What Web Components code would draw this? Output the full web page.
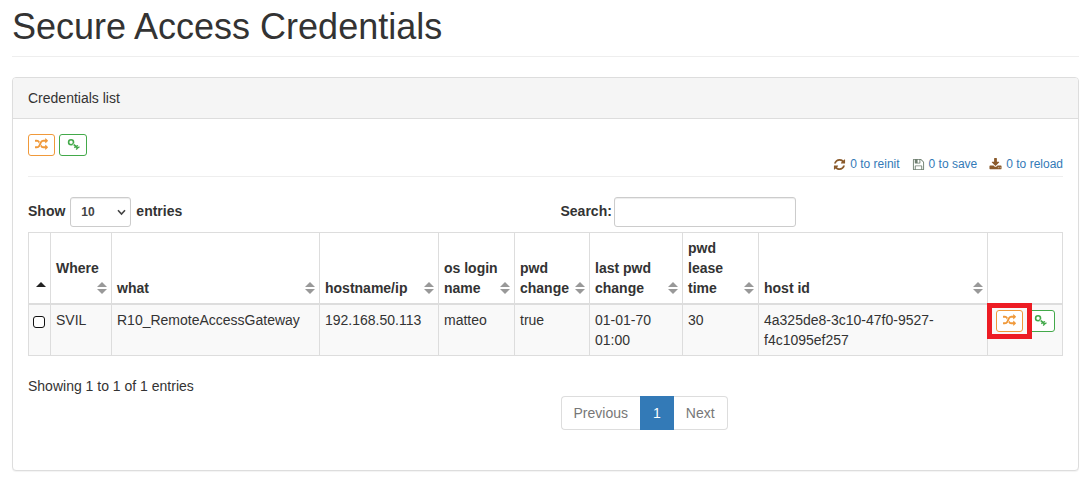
<!DOCTYPE html>
<html lang="en">
<head>
<meta charset="utf-8">
<title>Secure Access Credentials</title>
<style>
body { margin: 0; padding: 7px 10px 8px 12px; background: #fff; color: #333; font: 14px/20px "Liberation Sans", Arial, sans-serif; }
</style>
</head>
<body>
<page-header>Secure Access Credentials</page-header>
<main-panel>
  <span slot="heading">Credentials list</span>
  <action-bar></action-bar>
  <table-controls></table-controls>
  <credentials-table></credentials-table>
  <table-footer></table-footer>
</main-panel>

<script>
const define = (name, html, setup) => customElements.define(name, class extends HTMLElement {
  constructor() {
    super();
    const t = document.createElement('template');
    t.innerHTML = '<style>*{box-sizing:border-box}:host{display:block}</style>' + html;
    this.attachShadow({ mode: 'open' }).append(t.content.cloneNode(true));
  }
  connectedCallback() { if (setup) setup(this, this.shadowRoot); }
});

const ICONS = {
  random: 'M666 481q-60 92-137 273-22-45-37-72.5t-40.5-63.5-51-56.5-63-35-81.5-14.5h-224q-14 0-23-9t-9-23v-192q0-14 9-23t23-9h224q250 0 410 225zm1126 799q0 14-9 23l-320 320q-9 9-23 9-13 0-22.5-9.5t-9.5-22.5v-192q-32 0-85 .5t-81 1-73-1-71-5-64-10.5-63-18.5-58-28.5-59-40-55-53.5-56-69.5q59-93 136-273 22 45 37 72.5t40.5 63.5 51 56.5 63 35 81.5 14.5h256v-192q0-14 9-23t23-9q12 0 24 10l319 319q9 9 9 23zm0-896q0 14-9 23l-320 320q-9 9-23 9-13 0-22.5-9.5t-9.5-22.5v-192h-256q-48 0-87 15t-69 45-51 61.5-45 77.5q-32 62-78 171-29 66-49.5 111t-54 105-64 100-74 83-90 68.5-106.5 42-128 16.5h-224q-14 0-23-9t-9-23v-192q0-14 9-23t23-9h224q48 0 87-15t69-45 51-61.5 45-77.5q32-62 78-171 29-66 49.5-111t54-105 64-100 74-83 90-68.5 106.5-42 128-16.5h256v-192q0-14 9-23t23-9q12 0 24 10l319 319q9 9 9 23z',
  refresh: 'M1639 1056q0 5-1 7-64 268-268 434.5t-478 166.5q-146 0-282.5-55t-243.5-157l-129 129q-19 19-45 19t-45-19-19-45v-448q0-26 19-45t45-19h448q26 0 45 19t19 45-19 45l-137 137q71 66 161 102t187 36q134 0 250-65t186-179q11-17 53-117 8-23 30-23h192q13 0 22.5 9.5t9.5 22.5zm25-800v448q0 26-19 45t-45 19h-448q-26 0-45-19t-19-45 19-45l138-138q-148-137-349-137-134 0-250 65t-186 179q-11 17-53 117-8 23-30 23h-199q-13 0-22.5-9.5t-9.5-22.5v-7q65-268 270-434.5t480-166.5q146 0 284 55.5t245 156.5l130-129q19-19 45-19t45 19 19 45z',
  save: 'M512 1536h768v-384h-768v384zm896 0h128v-896q0-14-10-38.5t-20-34.5l-281-281q-10-10-34-20t-39-10v416q0 40-28 68t-68 28h-576q-40 0-68-28t-28-68v-416h-128v1280h128v-416q0-40 28-68t68-28h832q40 0 68 28t28 68v416zm-384-928v-320q0-13-9.5-22.5t-22.5-9.5h-192q-13 0-22.5 9.5t-9.5 22.5v320q0 13 9.5 22.5t22.5 9.5h192q13 0 22.5-9.5t9.5-22.5zm640 32v928q0 40-28 68t-68 28h-1344q-40 0-68-28t-28-68v-1344q0-40 28-68t68-28h928q40 0 88 20t76 48l280 280q28 28 48 76t20 88z',
  download: 'M1344 1344q0-26-19-45t-45-19-45 19-19 45 19 45 45 19 45-19 19-45zm256 0q0-26-19-45t-45-19-45 19-19 45 19 45 45 19 45-19 19-45zm128-224v320q0 40-28 68t-68 28h-1472q-40 0-68-28t-28-68v-320q0-40 28-68t68-28h465l135 136q58 56 136 56t136-56l136-136h464q40 0 68 28t28 68zm-325-569q17 41-14 70l-448 448q-18 19-45 19t-45-19l-448-448q-31-29-14-70 17-39 59-39h256v-448q0-26 19-45t45-19h256q26 0 45 19t19 45v448h256q42 0 59 39z',
  key: 'M560 130a450 450 0 1 0 0 900 450 450 0 0 0 0-900zm0 220a230 230 0 1 1 0 460 230 230 0 0 1 0-460zM760 900L900 760 1280 1050 1480 960 1560 1080 1420 1180 1500 1250 1680 1150 1770 1290 1520 1460 1340 1640 1200 1540 1310 1390 1220 1310 1080 1430 960 1320 1060 1180z'
};

define('ui-icon', `<style>:host{display:inline-block;width:13px;height:13px}svg{display:block;width:100%;height:100%}</style>
<svg viewBox="0 0 1792 1792" fill="currentColor" fill-rule="evenodd" aria-hidden="true"><path/></svg>`,
  (el, root) => root.querySelector('path').setAttribute('d', ICONS[el.getAttribute('name')]));

define('sort-icon', `<style>:host{display:inline-block;width:10px;height:12px;color:#999}:host([dir-up]){color:#222}:host([dir-up]) .down{display:none}svg{display:block}</style>
<svg width="10" height="12" viewBox="0 0 10 12" fill="currentColor" aria-hidden="true"><path d="M0 5 5 0l5 5z"/><path class="down" d="M0 7h10l-5 5z"/></svg>`);

define('icon-button', `<style>
:host{display:inline-block;position:relative;color:#f0993a}
:host([tone=success]){color:#43a94a}
button{display:flex;align-items:center;justify-content:center;width:27px;height:22px;padding:0 0 2px;border:1px solid currentColor;border-radius:3px;background:#fff;color:inherit}
:host([tone=success]) button{width:28px}
:host([highlight]){z-index:1}
:host([highlight])::after{content:"";position:absolute;inset:-7px -9px;border:5px solid #ed1c24;pointer-events:none}
</style><button type="button"></button>`,
  (el, root) => {
    const icon = document.createElement('ui-icon');
    icon.setAttribute('name', el.getAttribute('icon'));
    root.querySelector('button').replaceChildren(icon);
    root.querySelector('button').setAttribute('aria-label', el.getAttribute('label'));
  });

define('page-header', `<style>
:host{border-bottom:1px solid #eee;padding-bottom:9px;margin-bottom:20px}
h1{margin:0;font-size:36px;line-height:40px;font-weight:400}
</style><h1><slot></slot></h1>`);

define('main-panel', `<style>
:host{border:1px solid #ddd;border-radius:4px;background:#fff;box-shadow:0 1px 1px rgba(0,0,0,.05)}
header{padding:10px 15px;background:#f5f5f5;border-bottom:1px solid #ddd;border-radius:3px 3px 0 0}
section{padding:15px 15px 40px}
</style><header><slot name="heading"></slot></header><section><slot></slot></section>`);

define('action-bar', `<style>
:host{display:flex;justify-content:space-between;align-items:flex-start;border-bottom:1px solid #eee;padding-bottom:2px;margin-bottom:20px}
.buttons{display:flex;gap:4px}
nav{display:flex;gap:12px;padding-top:20px;font-size:12px}
a{display:flex;align-items:center;gap:4px;color:#337ab7;text-decoration:none}
ui-icon{color:#8a5a2b}
ui-icon[name=save]{color:#6f7f70}
</style>
<div class="buttons"><icon-button icon="random" label="Change passwords"></icon-button><icon-button icon="key" tone="success" label="Show passwords"></icon-button></div>
<nav><a href="#reinit"><ui-icon name="refresh"></ui-icon>0 to reinit</a><a href="#save"><ui-icon name="save"></ui-icon>0 to save</a><a href="#reload"><ui-icon name="download"></ui-icon>0 to reload</a></nav>`);

define('table-controls', `<style>
:host{display:grid;grid-template-columns:1fr 1fr;gap:30px;margin-bottom:5px}
div{display:flex;align-items:center;font-weight:700}
.length{gap:5px}
.find{gap:2px}
label,.length>span:last-child{padding-bottom:2px}
.box{position:relative;display:flex}
select,input{height:30px;border:1px solid #ccc;border-radius:3px;background:#fff;color:#555;font:12px/18px "Liberation Sans",Arial,sans-serif;box-shadow:inset 0 1px 1px rgba(0,0,0,.075)}
select{appearance:none;width:61px;padding:5px 10px;font-weight:700;color:#444}
input{width:182px;padding:5px 10px}
svg{position:absolute;right:5px;top:12px;pointer-events:none}
</style>
<div class="length"><label for="len">Show</label><span class="box"><select id="len"><option>10</option><option>25</option><option>50</option></select><svg width="9" height="7" viewBox="0 0 9 7" fill="none" stroke="#444" stroke-width="1.6" aria-hidden="true"><path d="M1 1.2 4.5 5 8 1.2"/></svg></span><span>entries</span></div>
<div class="find"><label for="search">Search:</label><input id="search" type="search"></div>`);

define('credentials-table', `<style>
table{width:100%;table-layout:fixed;border-collapse:separate;border-spacing:0;border:1px solid #ddd;border-width:1px 0 0 1px}
th,td{padding:5px;border-right:1px solid #ddd;text-align:left}
th{border-bottom:2px solid #ddd;vertical-align:bottom;font-weight:700}
td{border-bottom:1px solid #ddd;background:#f9f9f9;vertical-align:top}
th div{display:flex;flex-wrap:wrap;justify-content:space-between;align-items:flex-end}
th{padding-right:4px}
sort-icon{margin:4px 0 4px auto}
th:first-child,td:first-child{padding-left:4px}
input{appearance:none;display:block;width:12px;height:12px;margin:6px 0 0;border:1px solid #111;border-radius:3px;background:#fff}
.acts{display:flex;justify-content:center;gap:4px}
.c0{width:22px}.c1{width:61px}.c2{width:208px}.c3{width:119px}.c4{width:76px}.c5{width:75px}.c6{width:93px}.c7{width:76px}.c9{width:75px}
</style>
<table>
<colgroup><col class="c0"><col class="c1"><col class="c2"><col class="c3"><col class="c4"><col class="c5"><col class="c6"><col class="c7"><col><col class="c9"></colgroup>
<thead><tr>
<th aria-label="Select"><div><sort-icon dir-up></sort-icon></div></th>
<th><div><span>Where</span><sort-icon></sort-icon></div></th>
<th><div><span>what</span><sort-icon></sort-icon></div></th>
<th><div><span>hostname/ip</span><sort-icon></sort-icon></div></th>
<th><div><span>os login<br>name</span><sort-icon></sort-icon></div></th>
<th><div><span>pwd<br>change</span><sort-icon></sort-icon></div></th>
<th><div><span>last pwd<br>change</span><sort-icon></sort-icon></div></th>
<th><div><span>pwd<br>lease<br>time</span><sort-icon></sort-icon></div></th>
<th><div><span>host id</span><sort-icon></sort-icon></div></th>
<th aria-label="Actions"></th>
</tr></thead>
<tbody><tr>
<td><input type="checkbox" aria-label="Select SVIL"></td>
<td>SVIL</td><td>R10_RemoteAccessGateway</td><td>192.168.50.113</td><td>matteo</td><td>true</td><td>01-01-70<br>01:00</td><td>30</td><td>4a325de8-3c10-47f0-9527-<wbr>f4c1095ef257</td>
<td><div class="acts"><icon-button icon="random" highlight label="Change password"></icon-button><icon-button icon="key" tone="success" label="Show password"></icon-button></div></td>
</tr></tbody>
</table>`);

define('table-footer', `<style>
:host{display:grid;grid-template-columns:1fr 1fr;gap:30px;padding-top:20px}
nav{display:flex;padding-top:20px}
a{padding:6px 12px;border:1px solid #ddd;color:#777;text-decoration:none;background:#fff}
a:first-child{border-radius:4px 0 0 4px;border-right:0}
a:last-child{border-radius:0 4px 4px 0;border-left:0}
a[aria-current]{background:#337ab7;border-color:#337ab7;color:#fff}
</style>
<div>Showing 1 to 1 of 1 entries</div>
<nav aria-label="Pages"><a href="#prev">Previous</a><a href="#1" aria-current="page">1</a><a href="#next">Next</a></nav>`);
</script>
</body>
</html>
